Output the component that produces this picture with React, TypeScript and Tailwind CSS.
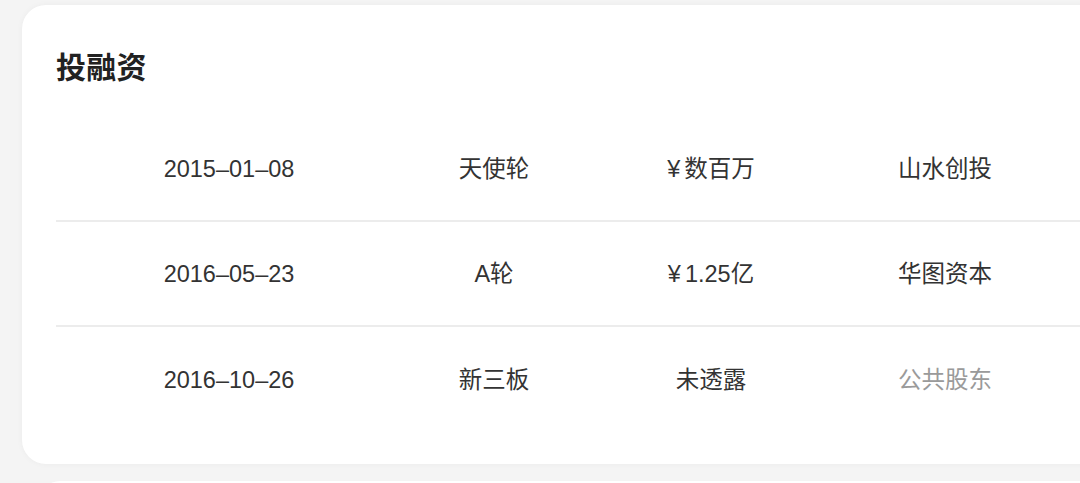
import React from "react";

const rows = [
  { date: "2015–01–08", round: "天使轮", yen: true, amount: "数百万", investor: "山水创投", muted: false },
  { date: "2016–05–23", round: "A轮", yen: true, amount: "1.25亿", investor: "华图资本", muted: false },
  { date: "2016–10–26", round: "新三板", yen: false, amount: "未透露", investor: "公共股东", muted: true },
];

export default function App() {
  return (
    <div
      className="w-[1080px] h-[483px] overflow-hidden bg-[#f4f4f4]"
      style={{ fontFamily: '"Liberation Sans", "Noto Sans CJK SC", sans-serif' }}
    >
      <div className="ml-[22px] mt-[5px] w-[1100px] h-[459px] bg-white rounded-[24px] shadow-[0_0_6px_rgba(0,0,0,0.04)] pl-[34px] pt-[43px]">
        <h2 className="text-[30px] leading-[40px] font-bold text-[#222] tracking-[0.3px]">投融资</h2>
        <div className="mt-[29px]">
          {rows.map((r, i) => (
            <div
              key={i}
              className={`grid grid-cols-[346px_184px_250px_218px_1fr] items-center h-[105px] pt-[3px] text-[23.5px] text-[#333] ${
                i < rows.length - 1 ? "border-b-2 border-[#ececec]" : ""
              }`}
            >
              <div className="text-center">{r.date}</div>
              <div className="text-center">{r.round}</div>
              <div className="text-center">
                {r.yen && <span className="mr-[4px]">¥</span>}
                {r.amount}
              </div>
              <div className={`text-center ${r.muted ? "text-[#9a9a9a]" : ""}`}>{r.investor}</div>
              <div />
            </div>
          ))}
        </div>
      </div>
      <div className="ml-[40px] mt-[17px] w-[1100px] h-[40px] bg-white rounded-[24px]" />
    </div>
  );
}
